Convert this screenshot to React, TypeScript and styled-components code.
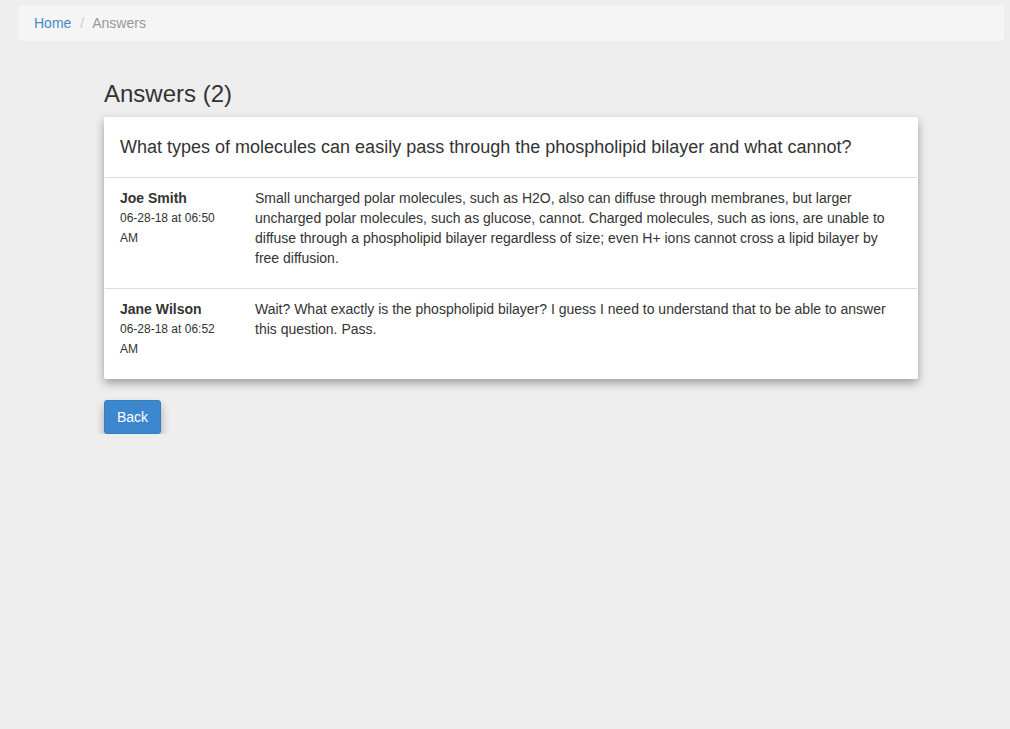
import React from "react";
import styled, { createGlobalStyle } from "styled-components";

const Global = createGlobalStyle`
  html, body { margin: 0; padding: 0; background: #eeeeee; }
  body { font-family: "Liberation Sans", Arial, sans-serif; color: #333; font-size: 14px; line-height: 20px; }
`;

const Page = styled.div`
  padding: 5px 6px 0 18px;
`;

const Breadcrumb = styled.ol`
  list-style: none;
  margin: 0;
  padding: 8px 16px;
  background: #f5f5f5;
  border-radius: 4px;
  display: flex;
  font-size: 14px;
  line-height: 20px;
`;

const Crumb = styled.li<{ $active?: boolean }>`
  color: ${(p) => (p.$active ? "#999" : "#428bca")};
  &:not(:first-child)::before {
    content: "/";
    color: #ccc;
    padding: 0 8px 0 9px;
  }
`;

const Main = styled.main`
  margin: 40px 0 0 86px;
  width: 814px;
`;

const Title = styled.h2`
  margin: 0 0 10px;
  font-size: 24px;
  line-height: 26px;
  font-weight: 500;
  color: #333;
`;

const Card = styled.section`
  background: #fff;
  border-radius: 2px;
  padding: 0 1px;
  box-shadow: 0 4px 10px rgba(0, 0, 0, 0.35);
`;

const Question = styled.h3`
  margin: 0;
  padding: 20px 15px 20px;
  font-size: 18px;
  line-height: 20px;
  font-weight: 400;
  color: #333;
  border-bottom: 1px solid #ddd;
`;

const Answer = styled.div`
  display: grid;
  grid-template-columns: 135px 1fr;
  padding: 10px 15px 20px;
  & + & { border-top: 1px solid #ddd; }
`;

const Author = styled.div`
  display: flex;
  flex-direction: column;
`;

const Name = styled.strong`
  font-size: 14px;
  font-weight: 700;
  line-height: 20px;
  color: #333;
`;

const Stamp = styled.span`
  font-size: 12px;
  line-height: 20px;
  color: #333;
  width: 105px;
`;

const Body = styled.p`
  margin: 0;
  font-size: 14px;
  line-height: 20px;
  color: #333;
`;

const Button = styled.button`
  margin-top: 21px;
  height: 34px;
  padding: 0 12px;
  background: #3d87cf;
  border: 1px solid #357ebd;
  border-radius: 3px;
  color: #fff;
  font-family: "Liberation Sans", Arial, sans-serif;
  font-size: 14px;
  box-shadow: 0 5px 10px rgba(0, 0, 0, 0.3);
  cursor: pointer;
`;

const answers = [
  {
    name: "Joe Smith",
    time: "06-28-18 at 06:50 AM",
    text: "Small uncharged polar molecules, such as H2O, also can diffuse through membranes, but larger uncharged polar molecules, such as glucose, cannot. Charged molecules, such as ions, are unable to diffuse through a phospholipid bilayer regardless of size; even H+ ions cannot cross a lipid bilayer by free diffusion.",
  },
  {
    name: "Jane Wilson",
    time: "06-28-18 at 06:52 AM",
    text: "Wait? What exactly is the phospholipid bilayer? I guess I need to understand that to be able to answer this question. Pass.",
  },
];

export default function App() {
  return (
    <>
      <Global />
      <Page>
        <Breadcrumb>
          <Crumb>Home</Crumb>
          <Crumb $active>Answers</Crumb>
        </Breadcrumb>
        <Main>
          <Title>Answers (2)</Title>
          <Card>
            <Question>What types of molecules can easily pass through the phospholipid bilayer and what cannot?</Question>
            {answers.map((a) => (
              <Answer key={a.name}>
                <Author>
                  <Name>{a.name}</Name>
                  <Stamp>{a.time}</Stamp>
                </Author>
                <Body>{a.text}</Body>
              </Answer>
            ))}
          </Card>
          <Button>Back</Button>
        </Main>
      </Page>
    </>
  );
}
